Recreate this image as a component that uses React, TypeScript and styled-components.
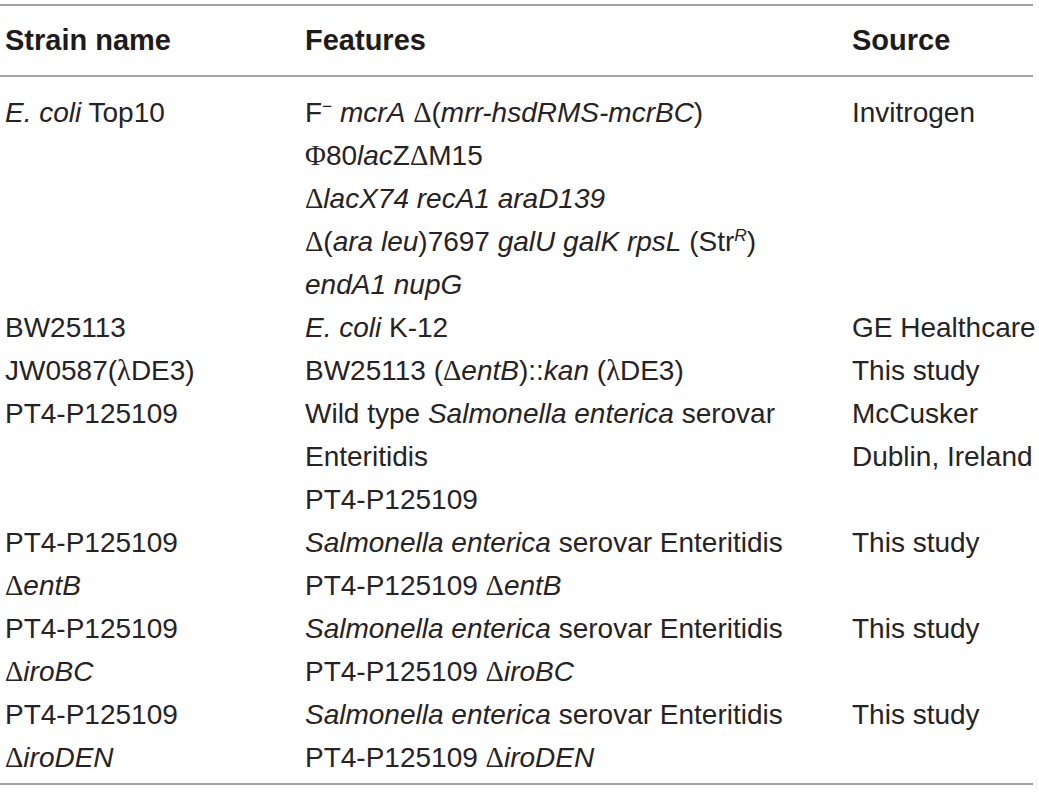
import React from 'react';
import styled, { createGlobalStyle } from 'styled-components';

const Global = createGlobalStyle`
  html, body { margin: 0; padding: 0; background: #ffffff; }
  body {
    font-family: "Liberation Sans", Arial, Helvetica, sans-serif;
    color: #262324;
  }
`;

const Page = styled.div`
  padding-top: 4px;
`;

const Table = styled.table`
  width: 1033px;
  border-collapse: collapse;
  table-layout: fixed;
  font-size: 28px;
  line-height: 43px;
  border-top: 2px solid #a3a3a3;
  border-bottom: 2px solid #a3a3a3;
`;

const HeadCell = styled.th`
  text-align: left;
  font-weight: 700;
  font-size: 29px;
  color: #1e1b1c;
  padding: 13px 0 13px 5px;
  border-bottom: 2px solid #a3a3a3;
  vertical-align: middle;
`;

const Cell = styled.td<{ $first?: boolean; $last?: boolean }>`
  vertical-align: top;
  padding: ${p => (p.$first ? '14px' : '0')} 0 ${p => (p.$last ? '4px' : '0')} 5px;
  font-weight: 400;
`;

const Line = styled.div`
  white-space: nowrap;
`;

const I = styled.i`
  font-style: italic;
`;

const Greek = styled.span`
  font-family: "Liberation Serif", "Times New Roman", serif;
  font-style: normal;
  font-size: 1.02em;
`;

const Sup = styled.sup`
  font-size: 0.62em;
  line-height: 0;
  vertical-align: 0.55em;
`;

type Row = { strain: React.ReactNode[]; features: React.ReactNode[]; source: React.ReactNode[] };

const D = () => <Greek>Δ</Greek>;

const rows: Row[] = [
  {
    strain: [<><I>E. coli</I> Top10</>],
    features: [
      <>F<Sup>−</Sup> <I>mcrA</I> <D />(<I>mrr-hsdRMS-mcrBC</I>)</>,
      <><Greek>Φ</Greek>80<I>lac</I>Z<D />M15</>,
      <><D /><I>lacX74 recA1 araD139</I></>,
      <><D />(<I>ara leu</I>)7697 <I>galU galK rpsL</I> (Str<Sup><I>R</I></Sup>)</>,
      <><I>endA1 nupG</I></>,
    ],
    source: ['Invitrogen'],
  },
  {
    strain: ['BW25113'],
    features: [<><I>E. coli</I> K-12</>],
    source: ['GE Healthcare'],
  },
  {
    strain: [<>JW0587(<Greek>λ</Greek>DE3)</>],
    features: [<>BW25113 (<D /><I>entB</I>)::<I>kan</I> (<Greek>λ</Greek>DE3)</>],
    source: ['This study'],
  },
  {
    strain: ['PT4-P125109'],
    features: [
      <>Wild type <I>Salmonella enterica</I> serovar</>,
      'Enteritidis',
      'PT4-P125109',
    ],
    source: ['McCusker', 'Dublin, Ireland'],
  },
  {
    strain: ['PT4-P125109', <><D /><I>entB</I></>],
    features: [
      <><I>Salmonella enterica</I> serovar Enteritidis</>,
      <>PT4-P125109 <D /><I>entB</I></>,
    ],
    source: ['This study'],
  },
  {
    strain: ['PT4-P125109', <><D /><I>iroBC</I></>],
    features: [
      <><I>Salmonella enterica</I> serovar Enteritidis</>,
      <>PT4-P125109 <D /><I>iroBC</I></>,
    ],
    source: ['This study'],
  },
  {
    strain: ['PT4-P125109', <><D /><I>iroDEN</I></>],
    features: [
      <><I>Salmonella enterica</I> serovar Enteritidis</>,
      <>PT4-P125109 <D /><I>iroDEN</I></>,
    ],
    source: ['This study'],
  },
];

const Lines = ({ items }: { items: React.ReactNode[] }) => (
  <>
    {items.map((it, i) => (
      <Line key={i}>{it}</Line>
    ))}
  </>
);

export default function App() {
  return (
    <Page>
      <Global />
      <Table>
        <colgroup>
          <col style={{ width: 300 }} />
          <col style={{ width: 547 }} />
          <col style={{ width: 186 }} />
        </colgroup>
        <thead>
          <tr>
            <HeadCell>Strain name</HeadCell>
            <HeadCell>Features</HeadCell>
            <HeadCell>Source</HeadCell>
          </tr>
        </thead>
        <tbody>
          {rows.map((r, i) => {
            const first = i === 0;
            const last = i === rows.length - 1;
            return (
              <tr key={i}>
                <Cell $first={first} $last={last}><Lines items={r.strain} /></Cell>
                <Cell $first={first} $last={last}><Lines items={r.features} /></Cell>
                <Cell $first={first} $last={last}><Lines items={r.source} /></Cell>
              </tr>
            );
          })}
        </tbody>
      </Table>
    </Page>
  );
}
